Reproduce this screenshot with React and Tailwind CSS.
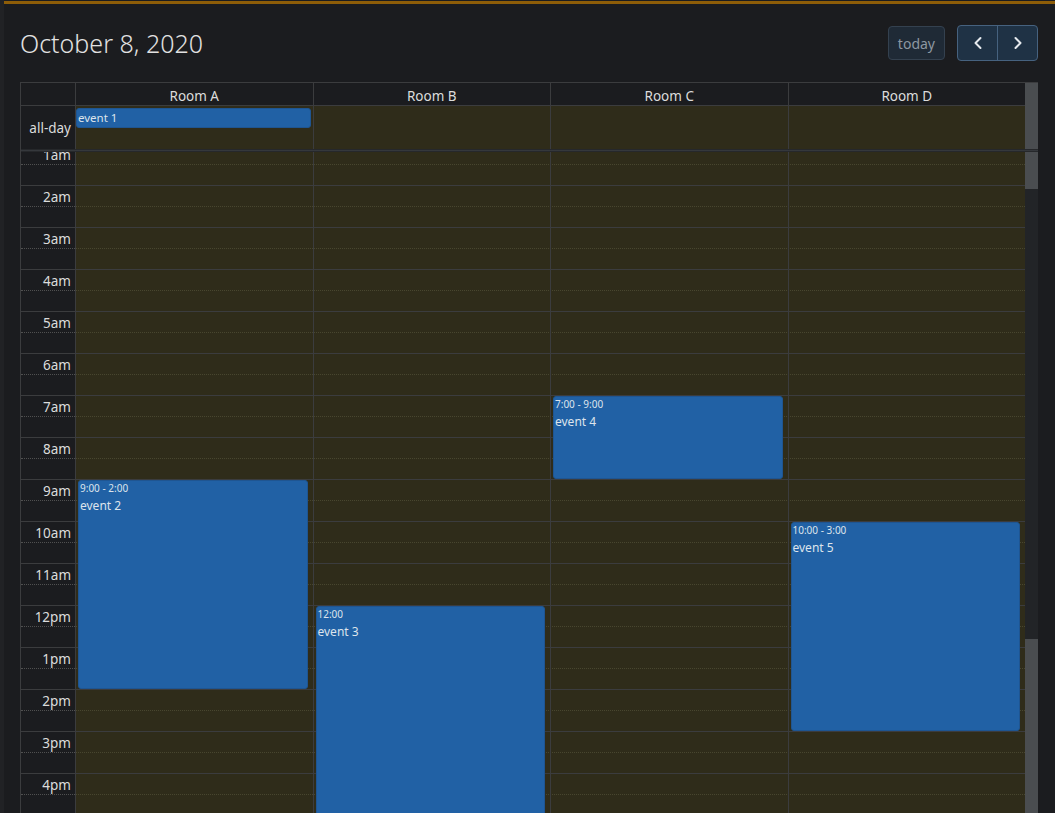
import React from 'react';
import { ChevronLeft, ChevronRight } from 'lucide-react';

const rooms = ['Room A', 'Room B', 'Room C', 'Room D'];
const hours = ['1am', '2am', '3am', '4am', '5am', '6am', '7am', '8am', '9am', '10am', '11am', '12pm', '1pm', '2pm', '3pm', '4pm'];

// start/end are hour offsets from 1am, 42px per hour
const events = [
  { room: 0, time: '9:00 - 2:00', title: 'event 2', start: 8, end: 13 },
  { room: 1, time: '12:00', title: 'event 3', start: 11, end: 18 },
  { room: 2, time: '7:00 - 9:00', title: 'event 4', start: 6, end: 8 },
  { room: 3, time: '10:00 - 3:00', title: 'event 5', start: 9, end: 14 },
];

const EventBlock = ({ ev }) => (
  <div
    className="absolute left-[2px] right-[5px] bg-[#2161a5] border border-[#1f5591] rounded-[3px] text-[#dde4ec] overflow-hidden"
    style={{ top: ev.start * 42 + 1, height: (ev.end - ev.start) * 42 - 1 }}
  >
    <div className="text-[10px] leading-[13px] pl-[1px] pt-[1px]">{ev.time}</div>
    <div className="text-[12px] leading-[16px] pl-[1px] mt-[3px]">{ev.title}</div>
  </div>
);

export default function App() {
  return (
    <div className="h-[813px] overflow-hidden bg-[#1b1c1f] border-l-4 border-[#212225] text-[#dcdcdc]" style={{ fontFamily: '"Noto Sans", "Open Sans", sans-serif' }}>
      <div className="pt-px">
        <div className="h-[3px] bg-[#8e5d08]" />
      </div>
      <div className="pl-4 pr-[17px]">
        {/* Toolbar */}
        <div className="flex items-center justify-between pt-[21px] pb-[21px]">
          <h1 className="text-[25px] font-light text-[#e2e2e2] leading-none">October 8, 2020</h1>
          <div className="flex items-center gap-3">
            <button className="h-[34px] px-[9px] rounded-[4px] bg-[#1f2a36] border border-[#34414f] text-[#8d97a1] text-[14px]">today</button>
            <div className="flex h-[36px] rounded-[4px] border border-[#46627f] bg-[#1f3245] overflow-hidden">
              <button className="w-[39px] flex items-center justify-center text-[#e6eaee]"><ChevronLeft size={20} strokeWidth={2.4} /></button>
              <div className="w-px bg-[#46627f]" />
              <button className="w-[39px] flex items-center justify-center text-[#e6eaee]"><ChevronRight size={20} strokeWidth={2.4} /></button>
            </div>
          </div>
        </div>

        {/* Calendar table */}
        <div className="border-t border-l border-[#3b3c3e]">
          {/* Resource header */}
          <div className="grid grid-cols-[54px_repeat(4,1fr)_13px] h-[22px] text-[13.5px]">
            <div />
            {rooms.map((r) => (
              <div key={r} className="border-l border-[#3b3c3e] flex items-center justify-center pt-[3px]">{r}</div>
            ))}
            <div className="bg-[#4a4d50]" />
          </div>
          {/* All-day row */}
          <div className="grid grid-cols-[54px_repeat(4,1fr)_13px] h-[44px] border-t border-[#3b3c3e]">
            <div className="flex items-center justify-end pr-[4px] text-[13.5px] pt-[2px]">all-day</div>
            {rooms.map((r, i) => (
              <div key={r} className="border-l border-[#3b3c3e] bg-[#2f2c1a] pt-[2px] pr-[2px]">
                {i === 0 && (
                  <div className="h-[20px] bg-[#2161a5] border border-[#1f5591] rounded-[3px] text-[11.5px] text-[#dde4ec] leading-[17px] pl-px">event 1</div>
                )}
              </div>
            ))}
            <div className="bg-[#4a4d50]" />
          </div>
          {/* Divider */}
          <div className="h-[3px] bg-[#35383c] border-y border-[#26282b]" />
          {/* Time grid */}
          <div className="flex h-[661px] overflow-hidden">
            <div className="flex-1 overflow-hidden">
              <div className="relative -mt-[9px]">
                {hours.map((h) => (
                  <div key={h} className="grid grid-cols-[54px_1fr] border-t border-[#3b3c3e]">
                    <div className="h-[41px] flex flex-col">
                      <div className="h-[20px] flex items-center justify-end pr-[4px] pt-[2px] text-[13.5px]">{h}</div>
                      <div className="border-t border-dotted border-[#505050]" />
                    </div>
                    <div className="h-[41px] bg-[#2f2c1a] flex flex-col">
                      <div className="h-[20px]" />
                      <div className="border-t border-dotted border-[#48462f]" />
                    </div>
                  </div>
                ))}
                {/* Resource columns over the slots */}
                <div className="absolute inset-0 grid grid-cols-[54px_repeat(4,1fr)]">
                  <div />
                  {rooms.map((r, i) => (
                    <div key={r} className="relative border-l border-[#3b3c3e]">
                      {events.filter((e) => e.room === i).map((ev) => (
                        <EventBlock key={ev.title} ev={ev} />
                      ))}
                    </div>
                  ))}
                </div>
              </div>
            </div>
            {/* Scrollbar */}
            <div className="w-[13px] flex flex-col">
              <div className="h-[37px] bg-[#4a4d50]" />
              <div className="h-[450px] bg-[#222427]" />
              <div className="flex-1 bg-[#4a4d50]" />
            </div>
          </div>
        </div>
      </div>
    </div>
  );
}
